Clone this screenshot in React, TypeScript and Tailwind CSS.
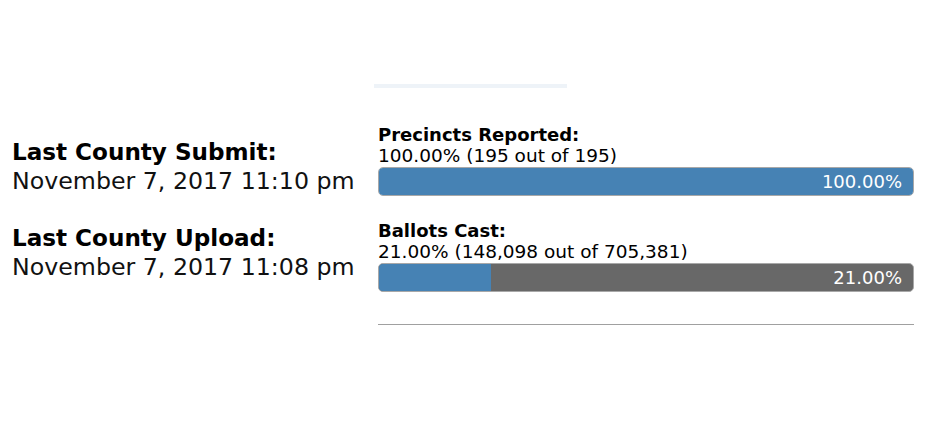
import React from 'react';

const font = { fontFamily: '"DejaVu Sans", Verdana, sans-serif' };

function ProgressBar({ pct, label }: { pct: number; label: string }) {
  return (
    <div className="grid h-[29px] w-full overflow-hidden rounded-[5px] border border-[#a8a8a8] bg-[#686868]">
      <div className="col-start-1 row-start-1 h-full bg-[#4682b4]" style={{ width: `${pct}%` }} />
      <div className="col-start-1 row-start-1 flex items-center justify-end pr-[11px] text-[18px] leading-none text-white">
        {label}
      </div>
    </div>
  );
}

function Stat({ title, value }: { title: string; value: string }) {
  return (
    <div>
      <div className="text-[23.1px] font-bold leading-[29px] text-black">{title}</div>
      <div className="text-[23.7px] leading-[29px] text-[#111]">{value}</div>
    </div>
  );
}

function Progress({ title, detail, pct, label }: { title: string; detail: string; pct: number; label: string }) {
  return (
    <div>
      <div className="text-[18px] font-bold leading-[21px] text-black">{title}</div>
      <div className="text-[18.5px] leading-[22px] text-black">{detail}</div>
      <ProgressBar pct={pct} label={label} />
    </div>
  );
}

export default function App() {
  return (
    <div className="h-[432px] w-[932px] overflow-hidden bg-white" style={font}>
      <div className="pl-[374px] pt-[84px]">
        <div className="h-[4px] w-[193px] bg-[#eef3f8]" />
      </div>
      <div className="mt-[36px] flex">
        <div className="flex w-[378px] flex-col gap-[28px] pl-[12px] pt-[14px]">
          <Stat title="Last County Submit:" value="November 7, 2017 11:10 pm" />
          <Stat title="Last County Upload:" value="November 7, 2017 11:08 pm" />
        </div>
        <div className="flex w-[536px] flex-col gap-[24px]">
          <Progress
            title="Precincts Reported:"
            detail="100.00% (195 out of 195)"
            pct={100}
            label="100.00%"
          />
          <Progress
            title="Ballots Cast:"
            detail="21.00% (148,098 out of 705,381)"
            pct={21}
            label="21.00%"
          />
          <div className="mt-[8px] h-px bg-[#a0a0a0]" />
        </div>
      </div>
    </div>
  );
}
